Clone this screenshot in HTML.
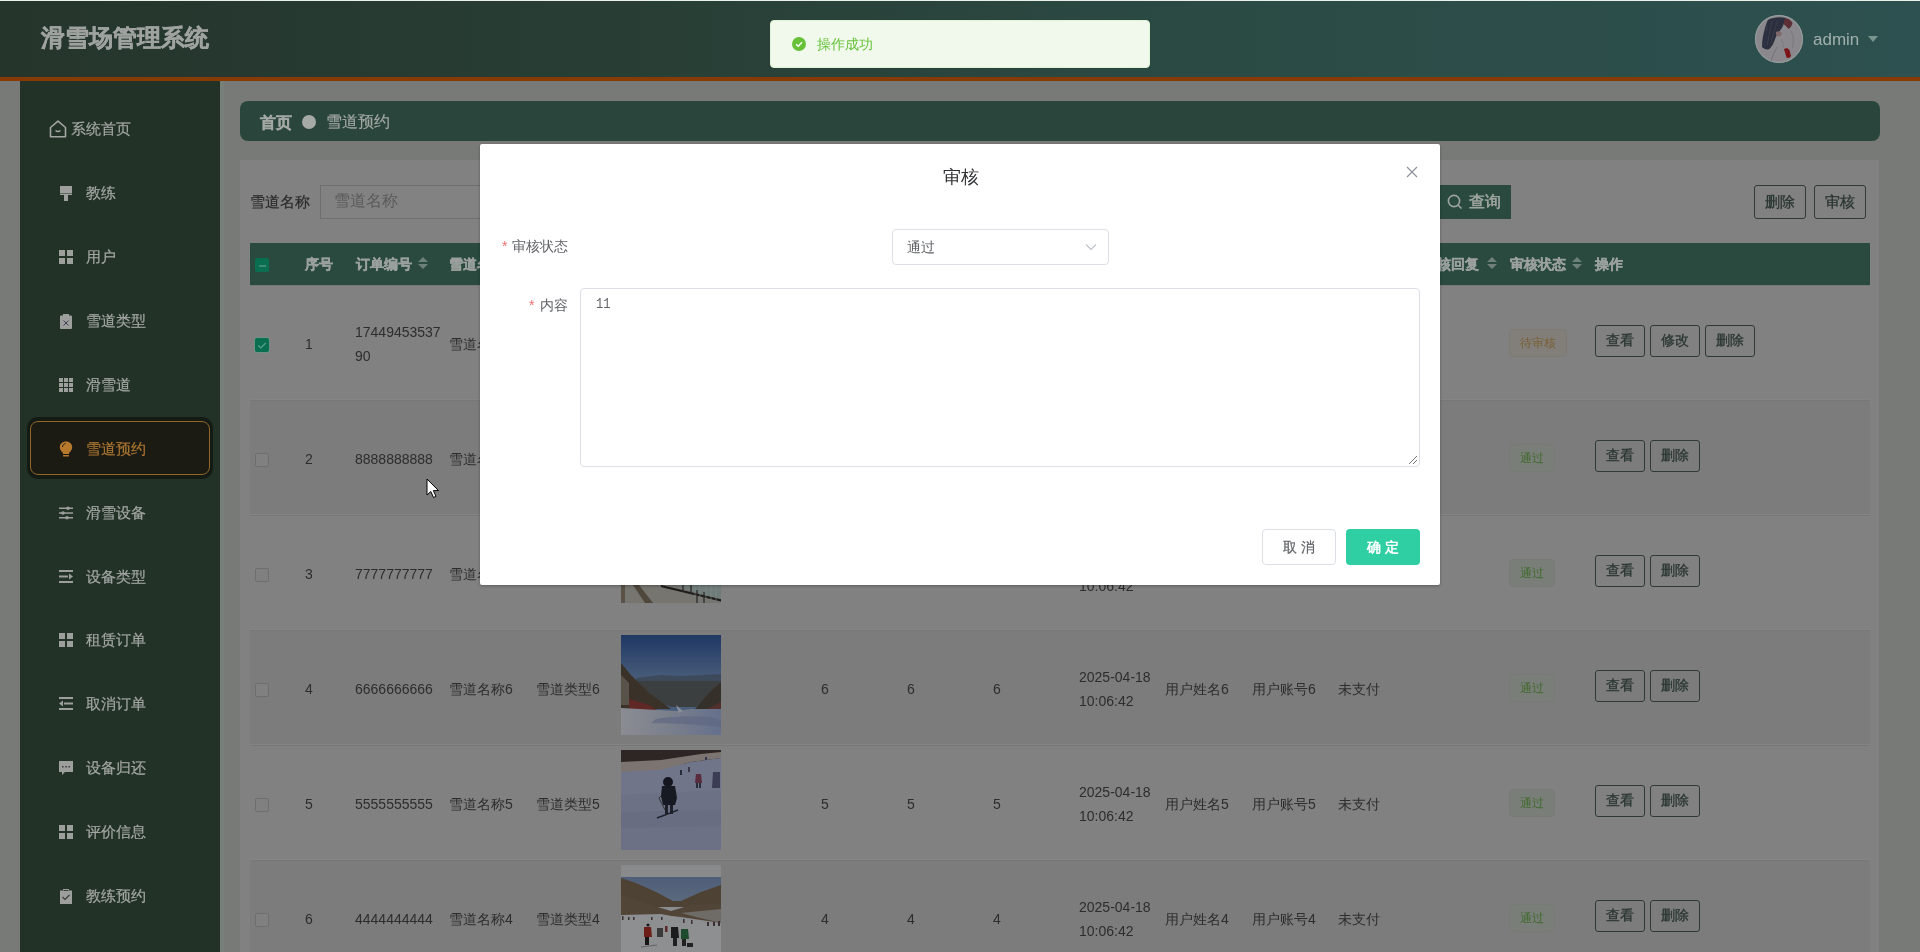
<!DOCTYPE html><html><head><meta charset="utf-8"><style>
*{box-sizing:border-box;margin:0;padding:0}
html,body{width:1920px;height:952px;overflow:hidden;font-family:"Liberation Sans",sans-serif;background:#777a77}
body{will-change:transform}
.a{position:absolute}
.nw{white-space:nowrap}
#topline{left:0;top:0;width:1920px;height:1px;background:#e9f1ea}
#hdr{left:0;top:1px;width:1920px;height:76px;background:linear-gradient(90deg,#25352b 0%,#283e35 33%,#2b4a44 62%,#2d5150 100%)}
#orange{left:0;top:77px;width:1920px;height:4px;background:#873a03}
#title{left:41px;top:21px;font-size:24px;line-height:34px;font-weight:600;color:#9fa3a0;-webkit-text-stroke:0.35px #9fa3a0}
#side{left:20px;top:81px;width:200px;height:871px;background:#233227}
.mi{position:absolute;left:20px;width:200px;height:22px;font-size:15px;color:#a3a7a3;white-space:nowrap}
.mi .t{-webkit-text-stroke:0.2px currentColor}
.mi .t{position:absolute;left:66px;top:0;line-height:22px}
.mi svg{position:absolute;left:39px;top:4px}
#bc{left:240px;top:101px;width:1640px;height:40px;background:#2a463c;border-radius:8px}
#panel{left:240px;top:160px;width:1639px;height:792px;background:#818181}
.c{position:absolute;white-space:nowrap;font-size:14px;color:#2d2d2d;line-height:20px}
.row{position:absolute;left:250px;width:1620px;height:115px;border-top:1px solid #777;border-bottom:1px solid #848484}
.row.even{background:#7c7c7c}
.th{position:absolute;white-space:nowrap;font-size:14px;font-weight:600;color:#9ba19e;line-height:20px;-webkit-text-stroke:0.3px #9ba19e}
.cb{position:absolute;width:14px;height:14px;border:1px solid #6e6e6e;border-radius:2px;background:#808080}
.tag{position:absolute;height:28px;line-height:26px;padding:0 10px;font-size:12px;border:1px solid;border-radius:4px;white-space:nowrap}
.tag.ok{background:#7a7e78;border-color:#767c74;color:#3f6a2d}
.tag.wait{background:#827f7a;border-color:#7f7a73;color:#7a5f36}
.btn{position:absolute;height:32px;width:50px;border:1.5px solid #2e3b35;border-radius:3px;font-size:14px;line-height:29px;text-align:center;color:#2a3631;font-weight:400;-webkit-text-stroke:0.3px #2a3631;white-space:nowrap}
</style></head><body>
<div id="topline" class="a"></div><div id="hdr" class="a"></div><div id="orange" class="a"></div>
<div id="title" class="a nw">滑雪场管理系统</div>
<div class="a" style="left:1755px;top:15px;width:48px;height:48px;border-radius:50%;overflow:hidden;background:#7e7f82">
<svg width="48" height="48" viewBox="0 0 48 48"><rect width="48" height="48" fill="#8a888c"/>
<circle cx="24" cy="24" r="23.5" fill="none" stroke="#93a3a0" stroke-width="1"/>
<path d="M13 5 C17 2.5 25 1.5 31 3 C30 6 28.5 9 27.5 12 C25 16 22 19 20.5 23 C19 27 17.5 31 14.5 34 C12 35 9 34 7 32 C7 26 8 20 9.5 15 C10.5 11 11.5 7.5 13 5Z" fill="#242837" opacity=".92"/><g stroke="#4a4d5c" stroke-width=".5" fill="none"><path d="M12 10 C11 18 10 25 9 31"/><path d="M17 6 C15 14 14 22 12 30"/><path d="M23 5 C20 12 18 20 16 28"/></g>
<path d="M9 30 C8 26 9 20 11 15 L13 22 C12 26 11 30 9 30Z" fill="#2c3040"/>
<path d="M30 3 C33 3.5 36 5 37.5 8 C37 11 35 13 33.5 14 C32 12 30 10 28.5 9 C29 7 29.5 5 30 3Z" fill="#5b2f35"/>
<path d="M21 17 C23 15.5 26 16 27 18.5 C26.5 21 24 22 22 21 C21 20 20.8 18.5 21 17Z" fill="#7f686c"/>
<path d="M29 34 C31 32.5 33 33 34.5 35 L36 41 C35 43 33 43.5 31.5 42.5Z" fill="#7d1418"/>
<path d="M16 46 C18 40 20 36 22 32" stroke="#716d74" stroke-width=".8" fill="none"/>
<path d="M36 16 C39 22 39 28 37 33" stroke="#747078" stroke-width=".7" fill="none"/>
<path d="M26 24 C28 27 29 30 28 33" stroke="#77737a" stroke-width=".6" fill="none"/>
</svg></div>
<div class="a nw" style="left:1813px;top:29px;font-size:17px;line-height:22px;color:#a2b0ad">admin</div>
<div class="a" style="left:1868px;top:36px;width:0;height:0;border-left:5px solid transparent;border-right:5px solid transparent;border-top:6px solid #7a9590"></div>
<div id="side" class="a"></div><div class="a" style="left:220px;top:81px;width:4px;height:871px;background:#78807a"></div>
<div class="a" style="left:49px;top:120px"><svg width="18" height="18" viewBox="0 0 18 18"><path d="M1.5 7.5 L9 1.2 L16.5 7.5 V16.8 H1.5Z" fill="none" stroke="#a3a6a2" stroke-width="1.6" stroke-linejoin="round"/><path d="M6.5 10.5 Q9 12.5 11.5 10.5" stroke="#a3a6a2" stroke-width="1.5" fill="none"/></svg></div>
<div class="a nw" style="left:71px;top:118px;font-size:14.6px;line-height:22px;color:#a3a7a3;-webkit-text-stroke:0.2px #a3a7a3">系统首页</div>
<div class="mi" style="top:182.0px"><svg width="14" height="16" viewBox="0 0 14 16"><g fill="#9c9f9b"><rect x="1" y="0" width="12" height="7"/><rect x="1" y="7.5" width="12" height="1.5"/><rect x="5" y="9" width="4" height="6"/></g></svg><span class="t">教练</span></div>
<div class="mi" style="top:245.9px"><svg width="14" height="14" viewBox="0 0 14 14"><rect x="0" y="0" width="6" height="6" fill="#9c9f9b"/><rect x="8" y="0" width="6" height="6" fill="#9c9f9b"/><rect x="0" y="8" width="6" height="6" fill="#9c9f9b"/><rect x="8" y="8" width="6" height="6" fill="#9c9f9b"/></svg><span class="t">用户</span></div>
<div class="mi" style="top:309.8px"><svg width="14" height="15" viewBox="0 0 14 15"><rect x="1" y="1.5" width="12" height="13.5" rx="1" fill="#9c9f9b"/><rect x="4" y="0" width="6" height="3" fill="#9c9f9b"/><path d="M4.5 6.5 L9.5 11.5 M9.5 6.5 L4.5 11.5" stroke="#3c3f55" stroke-width="1"/></svg><span class="t">雪道类型</span></div>
<div class="mi" style="top:373.8px"><svg width="14" height="14" viewBox="0 0 14 14"><g fill="#9c9f9b"><rect x="0" y="0" width="4" height="4"/><rect x="5" y="0" width="4" height="4"/><rect x="10" y="0" width="4" height="4"/><rect x="0" y="5" width="4" height="4"/><rect x="5" y="5" width="4" height="4"/><rect x="10" y="5" width="4" height="4"/><rect x="0" y="10" width="4" height="4"/><rect x="5" y="10" width="4" height="4"/><rect x="10" y="10" width="4" height="4"/></g></svg><span class="t">滑雪道</span></div>
<div class="a" style="left:27px;top:417px;width:186px;height:62px;border-radius:11px;background:#141a14"></div>
<div class="a" style="left:30px;top:421px;width:180px;height:54px;border-radius:8px;border:1px solid #916729;background:#1b1a13"></div>
<div class="mi" style="top:437.7px;color:#aa7631"><svg width="14" height="17" style="position:absolute;left:39px;top:3px" viewBox="0 0 14 17"><path d="M7 0.5 C3.2 0.5 0.8 3 0.8 6.3 C0.8 8.6 2 10 3.3 11.2 C3.9 11.8 4 12.3 4 13 H10 C10 12.3 10.1 11.8 10.7 11.2 C12 10 13.2 8.6 13.2 6.3 C13.2 3 10.8 0.5 7 0.5Z" fill="#b7792b"/><rect x="4" y="14" width="6" height="1.6" rx=".5" fill="#b7792b"/><path d="M3.5 6 C3.5 4 4.8 2.8 6.5 2.6" stroke="#1b1912" stroke-width="1" fill="none"/></svg><span class="t">雪道预约</span></div>
<div class="mi" style="top:501.6px"><svg width="14" height="14" viewBox="0 0 14 14"><g fill="#9c9f9b"><rect x="0" y="1.5" width="14" height="1.5"/><rect x="0" y="6.3" width="14" height="1.5"/><rect x="0" y="11" width="14" height="1.5"/><circle cx="9" cy="2.2" r="1.8"/><circle cx="4" cy="7" r="1.8"/><circle cx="8" cy="11.8" r="1.8"/></g></svg><span class="t">滑雪设备</span></div>
<div class="mi" style="top:565.5px"><svg width="14" height="13" viewBox="0 0 14 13"><g fill="#9c9f9b"><rect x="0" y="0" width="14" height="2"/><rect x="0" y="5.5" width="9" height="2"/><rect x="0" y="11" width="14" height="2"/><path d="M10 3.5 L14 6.5 L10 9.5Z"/></g></svg><span class="t">设备类型</span></div>
<div class="mi" style="top:629.4px"><svg width="14" height="14" viewBox="0 0 14 14"><rect x="0" y="0" width="6" height="6" fill="#9c9f9b"/><rect x="8" y="0" width="6" height="6" fill="#9c9f9b"/><rect x="0" y="8" width="6" height="6" fill="#9c9f9b"/><rect x="8" y="8" width="6" height="6" fill="#9c9f9b"/></svg><span class="t">租赁订单</span></div>
<div class="mi" style="top:693.4px"><svg width="14" height="13" viewBox="0 0 14 13"><g fill="#9c9f9b"><rect x="0" y="0" width="14" height="2"/><rect x="5" y="5.5" width="9" height="2"/><rect x="0" y="11" width="14" height="2"/><path d="M4 3.5 L0 6.5 L4 9.5Z"/></g></svg><span class="t">取消订单</span></div>
<div class="mi" style="top:757.3px"><svg width="14" height="15" viewBox="0 0 14 15"><path d="M0 0 H14 V11 H6 L3 14 V11 H0Z" fill="#9c9f9b"/><g fill="#3a3a3a"><rect x="3" y="5" width="1.5" height="1.5"/><rect x="6.3" y="5" width="1.5" height="1.5"/><rect x="9.5" y="5" width="1.5" height="1.5"/></g></svg><span class="t">设备归还</span></div>
<div class="mi" style="top:821.2px"><svg width="14" height="14" viewBox="0 0 14 14"><rect x="0" y="0" width="6" height="6" fill="#9c9f9b"/><rect x="8" y="0" width="6" height="6" fill="#9c9f9b"/><rect x="0" y="8" width="6" height="6" fill="#9c9f9b"/><rect x="8" y="8" width="6" height="6" fill="#9c9f9b"/></svg><span class="t">评价信息</span></div>
<div class="mi" style="top:885.1px"><svg width="14" height="15" viewBox="0 0 14 15"><rect x="1" y="1.5" width="12" height="13.5" fill="#9c9f9b"/><rect x="4" y="0" width="6" height="2.5" fill="#9c9f9b"/><rect x="4.5" y="1" width="5" height="1" fill="#3a3f3a"/><path d="M3.5 8 L6 10.5 L10.5 6" stroke="#3a3a3a" stroke-width="1.2" fill="none"/></svg><span class="t">教练预约</span></div>
<div id="bc" class="a"></div>
<div class="a nw" style="left:260px;top:111px;font-size:16px;line-height:24px;font-weight:600;color:#a3a8a5;-webkit-text-stroke:0.25px #a3a8a5">首页</div>
<div class="a" style="left:302px;top:115px;width:14px;height:14px;border-radius:50%;background:#a5aaa7"></div>
<div class="a nw" style="left:326px;top:110px;font-size:16px;line-height:24px;color:#a3a8a5;-webkit-text-stroke:0.15px #a3a8a5">雪道预约</div>
<div id="panel" class="a"></div>
<div class="a nw" style="left:250px;top:191px;font-size:15px;line-height:22px;color:#2b2b2b;-webkit-text-stroke:0.2px #2b2b2b">雪道名称</div>
<div class="a" style="left:320px;top:185px;width:400px;height:34px;border:1px solid #6f6f6f;background:#828282"></div>
<div class="a nw" style="left:334px;top:190px;font-size:16px;line-height:22px;color:#5a5a5a">雪道名称</div>
<div class="a" style="left:1380px;top:185px;width:131px;height:34px;background:#2a4a3f"></div>
<svg class="a" style="left:1447px;top:194px" width="16" height="16" viewBox="0 0 16 16"><circle cx="7" cy="7" r="5.6" stroke="#9da39f" stroke-width="1.6" fill="none"/><path d="M11 11 L14.5 14.5" stroke="#9da39f" stroke-width="1.6"/></svg>
<div class="a nw" style="left:1469px;top:191px;font-size:16px;line-height:22px;font-weight:600;color:#9da39f">查询</div>
<div class="btn" style="left:1754px;top:185px;width:52px;height:34px;line-height:31px;font-size:15px">删除</div>
<div class="btn" style="left:1814px;top:185px;width:52px;height:34px;line-height:31px;font-size:15px">审核</div>
<div class="a" style="left:250px;top:243px;width:1620px;height:42px;background:#2a4a3f"></div>
<div class="a" style="left:255px;top:258px;width:14px;height:14px;border-radius:2px;background:#0a6e50"></div>
<div class="a" style="left:258.5px;top:265px;width:7px;height:1.6px;background:#3f8a76"></div>
<div class="th" style="left:305px;top:254px">序号</div>
<div class="th" style="left:356px;top:254px">订单编号</div>
<svg class="a" style="left:418px;top:257px" width="10" height="13" viewBox="0 0 10 13"><path d="M5 0 L10 5 H0Z M0 7 H10 L5 12Z" fill="#6f7f79"/></svg>
<div class="th" style="left:449px;top:254px">雪道名称</div>
<div class="th" style="left:1423px;top:254px">审核回复</div>
<svg class="a" style="left:1487px;top:257px" width="10" height="13" viewBox="0 0 10 13"><path d="M5 0 L10 5 H0Z M0 7 H10 L5 12Z" fill="#6f7f79"/></svg>
<div class="th" style="left:1510px;top:254px">审核状态</div>
<svg class="a" style="left:1572px;top:257px" width="10" height="13" viewBox="0 0 10 13"><path d="M5 0 L10 5 H0Z M0 7 H10 L5 12Z" fill="#6f7f79"/></svg>
<div class="th" style="left:1595px;top:254px">操作</div>
<div class="row" style="top:285px"></div>
<div class="a" style="left:255px;top:338px;width:14px;height:14px;border-radius:2px;background:#0a6e50;box-shadow:0 0 0 .5px #5f9f8a"></div>
<svg class="a" style="left:255px;top:338px" width="14" height="14" viewBox="0 0 14 14"><path d="M3.2 7.5 L5.8 10 L10.8 5" stroke="#5aa48c" stroke-width="1.1" fill="none"/></svg>
<div class="c" style="left:305px;top:334px">1</div>
<div class="c" style="left:355px;top:320px;line-height:24px">17449453537<br>90</div>
<div class="c" style="left:449px;top:334px">雪道名称7</div>
<div class="c" style="left:536px;top:334px">雪道类型7</div>
<div class="c" style="left:821px;top:334px">7</div>
<div class="c" style="left:907px;top:334px">7</div>
<div class="c" style="left:993px;top:334px">7</div>
<div class="c" style="left:1079px;top:320px;line-height:24px">2025-04-18<br>10:06:42</div>
<div class="c" style="left:1165px;top:334px">用户姓名7</div>
<div class="c" style="left:1252px;top:334px">用户账号7</div>
<div class="c" style="left:1338px;top:334px">未支付</div>
<div class="tag wait" style="left:1509px;top:329px">待审核</div>
<div class="btn" style="left:1595px;top:325px">查看</div>
<div class="btn" style="left:1650px;top:325px">修改</div>
<div class="btn" style="left:1705px;top:325px">删除</div>
<div class="row even" style="top:400px"></div>
<div class="cb" style="left:255px;top:453px"></div>
<div class="c" style="left:305px;top:449px">2</div>
<div class="c" style="left:355px;top:449px">8888888888</div>
<div class="c" style="left:449px;top:449px">雪道名称8</div>
<div class="c" style="left:536px;top:449px">雪道类型8</div>
<div class="c" style="left:821px;top:449px">8</div>
<div class="c" style="left:907px;top:449px">8</div>
<div class="c" style="left:993px;top:449px">8</div>
<div class="c" style="left:1079px;top:435px;line-height:24px">2025-04-18<br>10:06:42</div>
<div class="c" style="left:1165px;top:449px">用户姓名8</div>
<div class="c" style="left:1252px;top:449px">用户账号8</div>
<div class="c" style="left:1338px;top:449px">未支付</div>
<div class="tag ok" style="left:1509px;top:444px">通过</div>
<div class="btn" style="left:1595px;top:440px">查看</div>
<div class="btn" style="left:1650px;top:440px">删除</div>
<div class="row" style="top:515px"></div>
<div class="cb" style="left:255px;top:568px"></div>
<div class="c" style="left:305px;top:564px">3</div>
<div class="c" style="left:355px;top:564px">7777777777</div>
<div class="c" style="left:449px;top:564px">雪道名称7</div>
<div class="c" style="left:536px;top:564px">雪道类型7</div>
<div class="a" style="left:621px;top:542px;width:100px;height:61px;overflow:hidden"><svg width="100" height="61" viewBox="0 0 100 61"><rect width="100" height="61" fill="#76756f"/><rect x="0" y="0" width="100" height="43" fill="#6f706c"/><path d="M55 43 L100 43 L100 60 Z" fill="#6f7c79"/><path d="M40 44 L100 58.5" stroke="#1e1c18" stroke-width="2.2"/><path d="M18 43 L32 61 L24 61 L12 43Z" fill="#4f473c"/><rect x="0" y="43" width="4" height="18" fill="#5a5246"/><g stroke="#2a2a2a" stroke-width="1.3"><path d="M62 43 V50"/><path d="M70 43 V52"/><path d="M76 48 V61"/><path d="M83 50 V61"/></g><g stroke="#7e8d8a" stroke-width=".6"><path d="M74 43 V55"/><path d="M79 43 V56"/><path d="M85 43 V57"/><path d="M90 43 V58"/><path d="M95 43 V59"/></g></svg></div>
<div class="c" style="left:821px;top:564px">7</div>
<div class="c" style="left:907px;top:564px">7</div>
<div class="c" style="left:993px;top:564px">7</div>
<div class="c" style="left:1079px;top:550px;line-height:24px">2025-04-18<br>10:06:42</div>
<div class="c" style="left:1165px;top:564px">用户姓名7</div>
<div class="c" style="left:1252px;top:564px">用户账号7</div>
<div class="c" style="left:1338px;top:564px">未支付</div>
<div class="tag ok" style="left:1509px;top:559px">通过</div>
<div class="btn" style="left:1595px;top:555px">查看</div>
<div class="btn" style="left:1650px;top:555px">删除</div>
<div class="row even" style="top:630px"></div>
<div class="cb" style="left:255px;top:683px"></div>
<div class="c" style="left:305px;top:679px">4</div>
<div class="c" style="left:355px;top:679px">6666666666</div>
<div class="c" style="left:449px;top:679px">雪道名称6</div>
<div class="c" style="left:536px;top:679px">雪道类型6</div>
<div class="a" style="left:621px;top:635px;width:100px;height:100px;overflow:hidden"><svg width="100" height="100" viewBox="0 0 100 100"><defs><linearGradient id="sk1" x1="0" y1="0" x2="0" y2="1"><stop offset="0" stop-color="#1f3864"/><stop offset=".45" stop-color="#4a5d7a"/></linearGradient><linearGradient id="sn1" x1="0" y1="0" x2="1" y2="0"><stop offset="0" stop-color="#8a8c92"/><stop offset=".5" stop-color="#7a7f8c"/><stop offset="1" stop-color="#65708c"/></linearGradient></defs><rect width="100" height="100" fill="url(#sk1)"/><path d="M15 43 L40 40 L60 41 L100 39 L100 48 L15 48Z" fill="#3d4a5c"/><path d="M10 46 L100 46 L100 50 L75 72 L50 72 L20 60Z" fill="#3b3f3f"/><path d="M0 28 L10 40 L28 58 L50 74 L0 74Z" fill="#3a3129"/><path d="M0 40 L8 48 L8 70 L0 70Z" fill="#59524a"/><path d="M8 64 L28 70 L36 75 L8 75Z" fill="#5f2825"/><path d="M100 47 L88 58 L74 74 L100 74Z" fill="#36302b"/><path d="M100 67 L86 74 L100 74Z" fill="#52302e"/><path d="M0 73 L55 76 L70 74 L100 74 L100 100 L0 100Z" fill="url(#sn1)"/><path d="M35 84 Q60 80 90 82 L100 86 L100 92 Q60 88 30 88Z" fill="#606882" opacity=".7"/><path d="M55 70 L62 76 L58 78Z" fill="#8a8e98"/></svg></div>
<div class="c" style="left:821px;top:679px">6</div>
<div class="c" style="left:907px;top:679px">6</div>
<div class="c" style="left:993px;top:679px">6</div>
<div class="c" style="left:1079px;top:665px;line-height:24px">2025-04-18<br>10:06:42</div>
<div class="c" style="left:1165px;top:679px">用户姓名6</div>
<div class="c" style="left:1252px;top:679px">用户账号6</div>
<div class="c" style="left:1338px;top:679px">未支付</div>
<div class="tag ok" style="left:1509px;top:674px">通过</div>
<div class="btn" style="left:1595px;top:670px">查看</div>
<div class="btn" style="left:1650px;top:670px">删除</div>
<div class="row" style="top:745px"></div>
<div class="cb" style="left:255px;top:798px"></div>
<div class="c" style="left:305px;top:794px">5</div>
<div class="c" style="left:355px;top:794px">5555555555</div>
<div class="c" style="left:449px;top:794px">雪道名称5</div>
<div class="c" style="left:536px;top:794px">雪道类型5</div>
<div class="a" style="left:621px;top:750px;width:100px;height:100px;overflow:hidden"><svg width="100" height="100" viewBox="0 0 100 100"><rect width="100" height="100" fill="#6c7186"/><rect width="100" height="14" fill="#2d2624"/><path d="M0 12 L40 10 L80 4 L100 2 L100 8 L70 12 L40 20 L0 22Z" fill="#7b7471"/><path d="M0 22 L40 20 L70 12 L100 8 L100 40 L0 45Z" fill="#70758a"/><path d="M0 62 L100 60 L100 76 L0 78Z" fill="#676c80" opacity=".7"/><ellipse cx="47" cy="32" rx="5" ry="5" fill="#141720"/><path d="M41 36 L54 36 L56 48 L54 55 L42 55 L40 46Z" fill="#171a22"/><rect x="44" y="55" width="3" height="9" fill="#1e2029"/><rect x="49" y="55" width="3" height="9" fill="#1e2029"/><path d="M36 68 L57 60" stroke="#20222c" stroke-width="1.4"/><path d="M40 46 L38 48 L44 60" stroke="#222" stroke-width=".8" fill="none"/><path d="M75 24 L80 24 L81 33 L74 33Z" fill="#5a2a3d"/><rect x="75" y="33" width="2" height="5" fill="#2a2d3a"/><rect x="78" y="33" width="2" height="5" fill="#2a2d3a"/><path d="M92 22 L99 22 L99 38 L91 38Z" fill="#3b3d55"/><rect x="59" y="20" width="2" height="5" fill="#252a36"/><rect x="67" y="17" width="2" height="5" fill="#3a3848"/><rect x="84" y="7" width="2" height="3" fill="#30344a"/></svg></div>
<div class="c" style="left:821px;top:794px">5</div>
<div class="c" style="left:907px;top:794px">5</div>
<div class="c" style="left:993px;top:794px">5</div>
<div class="c" style="left:1079px;top:780px;line-height:24px">2025-04-18<br>10:06:42</div>
<div class="c" style="left:1165px;top:794px">用户姓名5</div>
<div class="c" style="left:1252px;top:794px">用户账号5</div>
<div class="c" style="left:1338px;top:794px">未支付</div>
<div class="tag ok" style="left:1509px;top:789px">通过</div>
<div class="btn" style="left:1595px;top:785px">查看</div>
<div class="btn" style="left:1650px;top:785px">删除</div>
<div class="row even" style="top:860px"></div>
<div class="cb" style="left:255px;top:913px"></div>
<div class="c" style="left:305px;top:909px">6</div>
<div class="c" style="left:355px;top:909px">4444444444</div>
<div class="c" style="left:449px;top:909px">雪道名称4</div>
<div class="c" style="left:536px;top:909px">雪道类型4</div>
<div class="a" style="left:621px;top:865px;width:100px;height:100px;overflow:hidden"><svg width="100" height="100" viewBox="0 0 100 100"><defs><linearGradient id="vs" x1="0" y1="0" x2="0" y2="1"><stop offset="0" stop-color="#4f5e77"/><stop offset="1" stop-color="#5e6b80"/></linearGradient></defs><rect width="100" height="100" fill="#8b8c8f"/><rect y="0" width="100" height="12" fill="#898a8b"/><rect y="12" width="100" height="30" fill="url(#vs)"/><path d="M0 13 L15 18 L35 27 L52 36 L60 36 L80 27 L100 20 L100 42 L0 42Z" fill="#4e4234"/><path d="M0 30 L30 40 L50 46 L70 40 L100 38 L100 58 L60 52 L40 50 L0 52Z" fill="#514538"/><path d="M60 48 L100 44 L100 58 L75 52Z" fill="#6f6b66"/><path d="M0 50 L40 49 L55 52 L100 60 L100 100 L0 100Z" fill="#8e8f91"/><g fill="#3a2f30"><rect x="1" y="51" width="1.5" height="4"/><rect x="7" y="52" width="1.5" height="3"/><rect x="12" y="52" width="1.5" height="3"/><rect x="30" y="52" width="1.5" height="3"/><rect x="40" y="52" width="1.5" height="3"/><rect x="62" y="54" width="1.5" height="4"/><rect x="70" y="55" width="1.5" height="4"/><rect x="86" y="57" width="2" height="4"/><rect x="92" y="57" width="2" height="4"/><rect x="97" y="56" width="2" height="5"/></g><circle cx="27" cy="60" r="1.6" fill="#1a1a1a"/><path d="M23 62 L30 62 L31 72 L23 72Z" fill="#6c1d16"/><rect x="24" y="72" width="4" height="8" fill="#151515"/><path d="M20 82 L36 80" stroke="#555" stroke-width=".8"/><path d="M50 62 L57 62 L58 73 L50 73Z" fill="#1c1c1e"/><rect x="52" y="73" width="4" height="8" fill="#202022"/><path d="M60 64 L67 64 L68 74 L60 74Z" fill="#1e4a2e"/><rect x="61" y="74" width="4" height="7" fill="#222"/><path d="M66 78 L72 78 L72 82 L66 82Z" fill="#222"/><path d="M36 63 L42 63 L42 72 L36 72Z" fill="#3a3a3a"/><rect x="44" y="61" width="2.5" height="6" fill="#5a2a2a"/></svg></div>
<div class="c" style="left:821px;top:909px">4</div>
<div class="c" style="left:907px;top:909px">4</div>
<div class="c" style="left:993px;top:909px">4</div>
<div class="c" style="left:1079px;top:895px;line-height:24px">2025-04-18<br>10:06:42</div>
<div class="c" style="left:1165px;top:909px">用户姓名4</div>
<div class="c" style="left:1252px;top:909px">用户账号4</div>
<div class="c" style="left:1338px;top:909px">未支付</div>
<div class="tag ok" style="left:1509px;top:904px">通过</div>
<div class="btn" style="left:1595px;top:900px">查看</div>
<div class="btn" style="left:1650px;top:900px">删除</div>
<div class="a" style="left:480px;top:144px;width:960px;height:441px;background:#fff;border-radius:2px;box-shadow:0 1px 3px rgba(0,0,0,.3)"></div>
<div class="a nw" style="left:943px;top:165px;font-size:18px;line-height:24px;color:#303133">审核</div>
<svg class="a" style="left:1406px;top:166px" width="12" height="12" viewBox="0 0 12 12"><path d="M1 1 L11 11 M11 1 L1 11" stroke="#909399" stroke-width="1.3"/></svg>
<div class="a nw" style="left:502px;top:236px;font-size:14px;line-height:20px;color:#f56c6c">*</div>
<div class="a nw" style="left:512px;top:236px;font-size:14px;line-height:20px;color:#606266">审核状态</div>
<div class="a" style="left:892px;top:229px;width:217px;height:36px;border:1px solid #dcdfe6;border-radius:4px;background:#fff"></div>
<div class="a nw" style="left:907px;top:237px;font-size:14px;line-height:20px;color:#606266">通过</div>
<svg class="a" style="left:1085px;top:243px" width="12" height="8" viewBox="0 0 12 8"><path d="M1 1.5 L6 6.5 L11 1.5" stroke="#c0c4cc" stroke-width="1.2" fill="none"/></svg>
<div class="a nw" style="left:529px;top:295px;font-size:14px;line-height:20px;color:#f56c6c">*</div>
<div class="a nw" style="left:540px;top:295px;font-size:14px;line-height:20px;color:#606266">内容</div>
<div class="a" style="left:580px;top:288px;width:840px;height:179px;border:1px solid #dcdfe6;border-radius:4px;background:#fff"></div>
<div class="a nw" style="left:596px;top:292px;font-family:'Liberation Mono',monospace;font-size:12px;line-height:20px;color:#606266;transform:scaleY(1.22);transform-origin:0 0">11</div>
<svg class="a" style="left:1408px;top:455px" width="10" height="10" viewBox="0 0 10 10"><path d="M1 9 L9 1 M5 9 L9 5" stroke="#777" stroke-width="1"/></svg>
<div class="a" style="left:1262px;top:529px;width:74px;height:36px;border:1px solid #dcdfe6;border-radius:4px;background:#fff"></div>
<div class="a nw" style="left:1283px;top:537px;font-size:14px;line-height:20px;color:#606266;font-weight:400;-webkit-text-stroke:0.2px #606266;letter-spacing:4px">取消</div>
<div class="a" style="left:1346px;top:529px;width:74px;height:36px;border-radius:4px;background:#30cea3"></div>
<div class="a nw" style="left:1367px;top:537px;font-size:14px;line-height:20px;color:#fff;font-weight:600;letter-spacing:4px">确定</div>

<div class="a" style="left:770px;top:20px;width:380px;height:48px;background:#f0f9eb;border:1px solid #e1f3d8;border-radius:4px"></div>
<svg class="a" style="left:792px;top:37px" width="14" height="14" viewBox="0 0 14 14"><circle cx="7" cy="7" r="7" fill="#67c23a"/><path d="M4 7.2 L6.2 9.2 L10 5.2" stroke="#fff" stroke-width="1.4" fill="none"/></svg>
<div class="a nw" style="left:817px;top:34px;font-size:14px;line-height:20px;color:#67c23a">操作成功</div>

<svg class="a" style="left:426px;top:478px" width="14" height="21" viewBox="0 0 14 21"><path d="M1 1 L1 17 L4.8 13.5 L7.5 19.5 L10 18.4 L7.4 12.6 L12.5 12.6Z" fill="#fff" stroke="#000" stroke-width="1" stroke-linejoin="round"/></svg>
</body></html>
